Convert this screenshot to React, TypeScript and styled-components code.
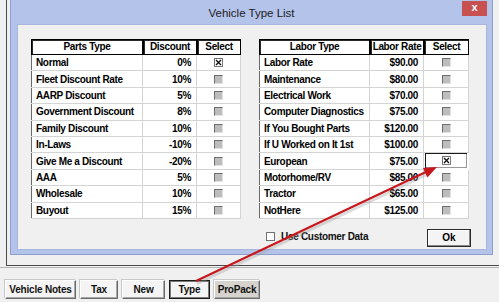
import React from "react";
import styled, { createGlobalStyle } from "styled-components";

const GlobalStyle = createGlobalStyle`
  html, body {
    margin: 0;
    padding: 0;
  }
  body {
    background: #f0f0f0;
    font-family: "Liberation Sans", Arial, sans-serif;
    overflow: hidden;
  }
  * {
    box-sizing: border-box;
  }
`;

type Row = { name: string; value: string; checked?: boolean; focused?: boolean };

const parts: Row[] = [
  { name: "Normal", value: "0%", checked: true },
  { name: "Fleet Discount Rate", value: "10%" },
  { name: "AARP Discount", value: "5%" },
  { name: "Government Discount", value: "8%" },
  { name: "Family Discount", value: "10%" },
  { name: "In-Laws", value: "-10%" },
  { name: "Give Me a Discount", value: "-20%" },
  { name: "AAA", value: "5%" },
  { name: "Wholesale", value: "10%" },
  { name: "Buyout", value: "15%" },
];

const labor: Row[] = [
  { name: "Labor Rate", value: "$90.00" },
  { name: "Maintenance", value: "$80.00" },
  { name: "Electrical Work", value: "$70.00" },
  { name: "Computer Diagnostics", value: "$75.00" },
  { name: "If You Bought Parts", value: "$120.00" },
  { name: "If U Worked on It 1st", value: "$100.00" },
  { name: "European", value: "$75.00", checked: true, focused: true },
  { name: "Motorhome/RV", value: "$85.00" },
  { name: "Tractor", value: "$65.00" },
  { name: "NotHere", value: "$125.00" },
];

const Check = ({ checked }: { checked?: boolean }) => (
  <CheckBox $checked={checked}>
    {checked && (
      <svg width="7" height="7" viewBox="0 0 7 7">
        <path d="M1 1 L6 6 M6 1 L1 6" stroke="#111" strokeWidth="1.4" />
      </svg>
    )}
  </CheckBox>
);

const GridTable = ({
  heads,
  cols,
  rows,
}: {
  heads: string[];
  cols: string;
  rows: Row[];
}) => (
  <Table>
    <HeadRow $cols={cols}>
      {heads.map((h) => (
        <HeadCell key={h}>{h}</HeadCell>
      ))}
    </HeadRow>
    <Body>
      {rows.map((r) => (
        <BodyRow key={r.name} $cols={cols}>
          <Cell>{r.name}</Cell>
          <Cell $align="right">{r.value}</Cell>
          <Cell $align="center" $focused={r.focused}>
            <Check checked={r.checked} />
          </Cell>
        </BodyRow>
      ))}
    </Body>
  </Table>
);

const App = () => (
  <Screen>
    <GlobalStyle />
    <AppPanel>
      <Dialog>
        <TitleBar>
          <span />
          <Title>Vehicle Type List</Title>
          <CloseButton>x</CloseButton>
        </TitleBar>
        <Content>
          <Columns>
            <GridTable
              heads={["Parts Type", "Discount", "Select"]}
              cols="112px 54px 44px"
              rows={parts}
            />
            <RightColumn>
              <GridTable
                heads={["Labor Type", "Labor Rate", "Select"]}
                cols="111px 54px 45px"
                rows={labor}
              />
              <Footer>
                <CustomerOption>
                  <PlainBox />
                  Use Customer Data
                </CustomerOption>
                <OkButton>Ok</OkButton>
              </Footer>
            </RightColumn>
          </Columns>
        </Content>
      </Dialog>
    </AppPanel>
    <Groove />
    <ButtonBar>
      <ToolButton>Vehicle Notes</ToolButton>
      <ToolButton $w={38}>Tax</ToolButton>
      <ToolButton $w={43}>New</ToolButton>
      <ToolButton $w={41} $pressed>Type</ToolButton>
      <ToolButton $w={46} $dark>ProPack</ToolButton>
    </ButtonBar>
    <Arrow width="499" height="302" viewBox="0 0 499 302">
      <line x1="196" y1="282" x2="428" y2="172" stroke="#9a9a9a" strokeOpacity="0.35" strokeWidth="3" transform="translate(1 1.5)" />
      <line x1="196" y1="281" x2="428" y2="171" stroke="#c8161d" strokeWidth="2" />
      <polygon points="437,167 427.4,177.4 423,168" fill="#c8161d" />
    </Arrow>
  </Screen>
);

export default App;

const Screen = styled.div`
  position: relative;
  width: 499px;
  height: 302px;
  background: #f0f0f0;
  overflow: hidden;
`;

const AppPanel = styled.div`
  margin-left: 6px;
  width: 493px;
  height: 266px;
  padding-left: 3px;
  border-left: 1px solid #4a4a4a;
  border-bottom: 1px solid #4a4a4a;
`;

const Groove = styled.div`
  height: 1px;
  margin-top: 1px;
  background: #b4b4b4;
`;

const Dialog = styled.div`
  width: 483px;
  height: 255px;
  display: flex;
  flex-direction: column;
  background: #b4c3ea;
  border: 1px solid #8f9fcc;
  border-top: none;
`;

const TitleBar = styled.div`
  height: 24px;
  display: grid;
  grid-template-columns: 1fr auto 1fr;
  align-items: start;
`;

const Title = styled.div`
  font-size: 11.5px;
  color: #1c1c1c;
  line-height: 14px;
  margin-top: 6px;
`;

const CloseButton = styled.div`
  justify-self: end;
  margin-right: 5px;
  margin-top: 1px;
  width: 25px;
  height: 15px;
  background: #c75050;
  color: #fff;
  font-weight: bold;
  font-size: 11px;
  line-height: 13px;
  text-align: center;
`;

const Content = styled.div`
  flex: 1;
  margin: 0 5px 4px 6px;
  background: #f0f0f0;
  border: 1px solid #a8b6dd;
  padding: 14px 0 0 13px;
`;

const Columns = styled.div`
  display: flex;
  align-items: flex-start;
  gap: 18px;
`;

const RightColumn = styled.div`
  display: flex;
  flex-direction: column;
`;

const Table = styled.div`
  width: 210px;
  font-size: 10px;
  font-weight: bold;
  letter-spacing: -0.35px;
  color: #000;
`;

const HeadRow = styled.div<{ $cols: string }>`
  display: grid;
  grid-template-columns: ${(p) => p.$cols};
  height: 16px;
`;

const HeadCell = styled.div`
  background: #fff;
  border: 1px solid #000;
  box-shadow: inset 1px 1px 0 #2a2a2a;
  text-align: center;
  line-height: 14px;
`;

const Body = styled.div`
  background: #fff;
  border-left: 1px solid #6a6a6a;
`;

const BodyRow = styled.div<{ $cols: string }>`
  display: grid;
  grid-template-columns: ${(p) => p.$cols};
  height: 16.4px;
  margin-left: -1px;
`;

const Cell = styled.div<{ $align?: "left" | "right" | "center"; $focused?: boolean }>`
  display: flex;
  align-items: center;
  justify-content: ${(p) =>
    p.$align === "right" ? "flex-end" : p.$align === "center" ? "center" : "flex-start"};
  padding: ${(p) => (p.$align === "right" ? "0 5px 0 0" : p.$align === "center" ? "0" : "0 0 0 5px")};
  border-right: 1px solid #d4d4d4;
  border-bottom: 1px solid #d4d4d4;
  white-space: nowrap;
  ${(p) =>
    p.$focused &&
    `
    box-shadow: inset 1px 1px 0 #1a1a1a, inset -1px -1px 0 #9a9a9a;
    margin: 0 1px 1px 1px;
    border-color: transparent;
  `}
`;

const CheckBox = styled.div<{ $checked?: boolean }>`
  width: 9px;
  height: 9px;
  display: flex;
  align-items: center;
  justify-content: center;
  background: ${(p) => (p.$checked ? "#fff" : "#bdbdbd")};
  border-top: 1px solid #6e6e6e;
  border-left: 1px solid #6e6e6e;
  border-right: 1px solid ${(p) => (p.$checked ? "#7a7a7a" : "#e2e2e2")};
  border-bottom: 1px solid ${(p) => (p.$checked ? "#7a7a7a" : "#e2e2e2")};
`;

const Footer = styled.div`
  margin-top: 10px;
  margin-right: -2px;
  display: flex;
  justify-content: space-between;
  align-items: flex-start;
`;

const CustomerOption = styled.div`
  display: flex;
  align-items: center;
  gap: 6px;
  margin: 2px 0 0 7px;
  font-size: 10px;
  font-weight: bold;
  letter-spacing: -0.3px;
  color: #111;
`;

const PlainBox = styled.div`
  width: 9px;
  height: 9px;
  background: #fff;
  border: 1px solid #707070;
`;

const OkButton = styled.div`
  width: 44px;
  height: 18px;
  background: #f4f4f4;
  border: 1px solid #2a2a2a;
  box-shadow: inset -1px -1px 0 #8a8a8a, inset 1px 1px 0 #fff;
  font-size: 10px;
  font-weight: bold;
  line-height: 16px;
  text-align: center;
  color: #000;
`;

const ButtonBar = styled.div`
  display: flex;
  gap: 4px;
  margin: 12px 0 0 5px;
`;

const ToolButton = styled.div<{ $w?: number; $pressed?: boolean; $dark?: boolean }>`
  width: ${(p) => (p.$w ? `${p.$w}px` : "71px")};
  height: 19px;
  background: ${(p) => (p.$dark ? "#d6d3ce" : "#f4f4f4")};
  border: 1px solid ${(p) => (p.$pressed ? "#1a1a1a" : "#6a6a6a")};
  border-top-color: ${(p) => (p.$pressed ? "#1a1a1a" : "#ffffff")};
  border-left-color: ${(p) => (p.$pressed ? "#1a1a1a" : "#ffffff")};
  box-shadow: ${(p) =>
    p.$pressed
      ? "inset -1px -1px 0 #7a7a7a, inset 1px 1px 0 #7a7a7a"
      : "inset -1px -1px 0 #a8a8a8, -1px -1px 0 #c8c8c8"};
  font-size: 10px;
  font-weight: bold;
  letter-spacing: -0.2px;
  line-height: 17px;
  text-align: center;
  color: #111;
  white-space: nowrap;
`;

const Arrow = styled.svg`
  position: absolute;
  left: 0;
  top: 0;
  pointer-events: none;
`;
